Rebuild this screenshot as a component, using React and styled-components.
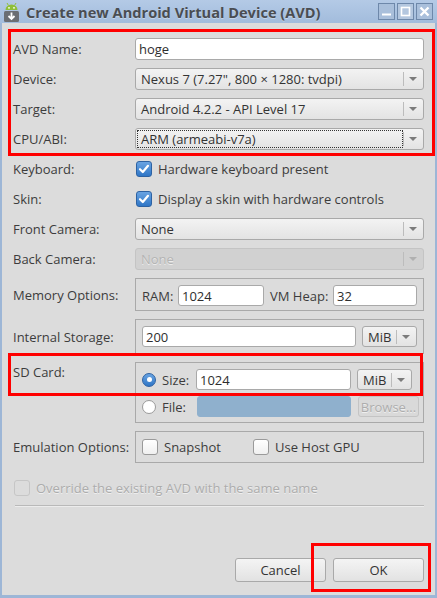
import React from 'react';
import styled, { createGlobalStyle, css } from 'styled-components';

const Global = createGlobalStyle`
  html, body {
    margin: 0;
    padding: 0;
    background: #dcdcdc;
  }
  body {
    font-family: "Open Sans", "DejaVu Sans", sans-serif;
    font-size: 13px;
    color: #3c3c3c;
  }
`;

const Window = styled.div`
  position: relative;
  width: 437px;
  height: 598px;
  box-sizing: border-box;
  border-left: 2px solid #9db6d6;
  border-right: 2px solid #9db6d6;
  border-bottom: 3px solid #9db6d6;
  display: flex;
  flex-direction: column;
  background: #dcdcdc;
`;

const TitleBar = styled.div`
  height: 23px;
  flex: none;
  display: flex;
  align-items: center;
  padding: 0 2px 0 3px;
  margin: 0 -2px;
  background: linear-gradient(#b4cae6, #a2bcdc);
`;

const Title = styled.div`
  flex: 1;
  margin-left: 6px;
  font-weight: 700;
  font-size: 14.6px;
  color: #4a4d52;
  text-shadow: 0 1px 0 rgba(255, 255, 255, 0.35);
  white-space: nowrap;
`;

const WinButtons = styled.div`
  display: flex;
  gap: 2px;
  margin-right: 2px;
`;

const WinButton = styled.div`
  width: 15px;
  height: 15px;
  border: 1px solid #6e88aa;
  background: ${p => (p.$dim ? '#b4c7df' : '#a9bfdb')};
  display: flex;
  align-items: center;
  justify-content: center;
`;

const Content = styled.div`
  flex: 1;
  min-height: 0;
  display: flex;
  flex-direction: column;
  padding: 15px 11px 13px 11px;
`;

const Form = styled.div`
  display: grid;
  grid-template-columns: 122px minmax(0, 1fr);
  row-gap: 8px;
`;

const Label = styled.div`
  display: flex;
  align-items: ${p => (p.$top ? 'flex-start' : 'center')};
  padding-top: ${p => (p.$top ? '1px' : '0')};
  min-height: 22px;
  white-space: nowrap;
`;

const Field = styled.div`
  box-sizing: border-box;
  height: 21px;
  width: ${p => p.$w || 'auto'};
  flex: ${p => (p.$w ? 'none' : '1')};
  min-width: 0;
  border: 1px solid #a9a9a9;
  border-radius: 3px;
  background: #fff;
  padding: 0 3px;
  display: flex;
  align-items: center;
  color: #2e2e2e;
  ${p =>
    p.$tall &&
    css`
      height: 22px;
    `}
  ${p =>
    p.$disabled &&
    css`
      background: #8fb0cd;
      border-color: #8fb0cd;
    `}
`;

const Combo = styled.div`
  box-sizing: border-box;
  height: ${p => (p.$short ? 21 : 22)}px;
  width: ${p => p.$w || 'auto'};
  flex: ${p => (p.$w ? 'none' : '1')};
  min-width: 0;
  border: 1px solid #a9a9a9;
  border-radius: 3px;
  background: linear-gradient(#f3f3f3, #e3e3e3);
  display: flex;
  align-items: center;
  padding: 1px;
  color: #333;
  ${p =>
    p.$disabled &&
    css`
      background: #d1d1d1;
      border-color: #c4c4c4;
      color: #b4b4b4;
      text-shadow: 0 1px 0 #ececec;
    `}
`;

const ComboText = styled.div`
  flex: 1;
  min-width: 0;
  height: 100%;
  box-sizing: border-box;
  display: flex;
  align-items: center;
  padding-left: 3px;
  white-space: nowrap;
  overflow: hidden;
  border: 1px dotted ${p => (p.$focused ? '#333' : 'transparent')};
`;

const ComboArrow = styled.div`
  width: 18px;
  height: 14px;
  flex: none;
  border-left: 1px solid #bcbcbc;
  display: flex;
  align-items: center;
  justify-content: center;
  &::after {
    content: '';
    border-left: 4px solid transparent;
    border-right: 4px solid transparent;
    border-top: 4px solid ${p => (p.$disabled ? '#b0b0b0' : '#7b7b7b')};
  }
`;

const CheckRow = styled.div`
  display: flex;
  align-items: center;
  gap: 6px;
  min-height: 22px;
  padding-left: ${p => p.$indent || 0}px;
  color: ${p => (p.$disabled ? '#acacac' : 'inherit')};
  text-shadow: ${p => (p.$disabled ? '0 1px 0 #efefef' : 'none')};
  white-space: nowrap;
`;

const Box = styled.div`
  box-sizing: border-box;
  width: 16px;
  height: 16px;
  flex: none;
  border-radius: 3px;
  display: flex;
  align-items: center;
  justify-content: center;
  border: 1px solid #9a9a9a;
  background: linear-gradient(#ffffff, #f0f0f0);
  ${p =>
    p.$checked &&
    css`
      border-color: #2d62a3;
      background: linear-gradient(#6aa4e2, #2f76c6);
    `}
  ${p =>
    p.$disabled &&
    css`
      border-color: #c6c6c6;
      background: #dcdcdc;
    `}
`;

const Radio = styled.div`
  box-sizing: border-box;
  width: 14px;
  height: 14px;
  flex: none;
  border-radius: 50%;
  border: 1px solid ${p => (p.$checked ? '#2d62a3' : '#9a9a9a')};
  background: ${p => (p.$checked ? 'linear-gradient(#6aa4e2, #2f76c6)' : '#fff')};
  display: flex;
  align-items: center;
  justify-content: center;
  &::after {
    content: '';
    display: ${p => (p.$checked ? 'block' : 'none')};
    width: 5px;
    height: 5px;
    border-radius: 50%;
    background: #fff;
  }
`;

const Group = styled.div`
  box-sizing: border-box;
  border: 1px solid #a9a9a9;
  padding: ${p => p.$pad || '6px 6px 4px'};
  display: flex;
  flex-direction: column;
  gap: 6px;
`;

const GroupRow = styled.div`
  display: flex;
  align-items: center;
  gap: ${p => p.$gap ?? 6}px;
`;

const Caption = styled.span`
  flex: none;
  white-space: nowrap;
  width: ${p => (p.$w ? p.$w + 'px' : 'auto')};
`;

const Button = styled.div`
  box-sizing: border-box;
  width: ${p => p.$w || 91}px;
  height: 24px;
  flex: none;
  border: 1px solid #a9a9a9;
  border-radius: 3px;
  background: linear-gradient(#f4f4f4, #e2e2e2);
  display: flex;
  align-items: center;
  justify-content: center;
  color: #333;
  ${p =>
    p.$disabled &&
    css`
      height: 21px;
      margin-left: 1px;
      background: #d9d9d9;
      border-color: #c4c4c4;
      color: #adadad;
      text-shadow: 0 1px 0 #efefef;
    `}
`;

const Override = styled(CheckRow)`
  margin-top: 14px;
`;

const Separator = styled.div`
  margin-top: 6px;
  margin-left: 2px;
  height: 1px;
  background: #b9b9b9;
  border-bottom: 1px solid #ececec;
`;

const Spacer = styled.div`
  flex: 1;
`;

const Footer = styled.div`
  display: flex;
  justify-content: flex-end;
  gap: 7px;
`;

const Mark = styled.div`
  position: absolute;
  box-sizing: border-box;
  border: 3px solid #ff0000;
  left: ${p => p.$x}px;
  top: ${p => p.$y}px;
  width: ${p => p.$w}px;
  height: ${p => p.$h}px;
  pointer-events: none;
`;

const Check = () => (
  <svg width="12" height="12" viewBox="0 0 12 12">
    <path d="M2 6.2 L4.8 9 L10 2.8" fill="none" stroke="#fff" strokeWidth="2.2" strokeLinecap="round" strokeLinejoin="round" />
  </svg>
);

const AppIcon = () => (
  <svg width="17" height="20" viewBox="0 0 17 20">
    <line x1="4" y1="1" x2="5.5" y2="3.5" stroke="#8fbf3a" strokeWidth="1" />
    <line x1="13" y1="1" x2="11.5" y2="3.5" stroke="#8fbf3a" strokeWidth="1" />
    <path d="M2.5 8 A6 5.5 0 0 1 14.5 8 Z" fill="#8fbf3a" />
    <circle cx="6" cy="5.8" r="0.9" fill="#fff" />
    <circle cx="11" cy="5.8" r="0.9" fill="#fff" />
    <rect x="1" y="9" width="15" height="11" rx="1.5" fill="#6b6e73" />
    <path d="M8.5 10.5 V16.5 M5.5 14 L8.5 17 L11.5 14" fill="none" stroke="#fff" strokeWidth="1.8" />
  </svg>
);

const MinGlyph = () => (
  <svg width="11" height="11" viewBox="0 0 11 11">
    <rect x="1" y="7.5" width="9" height="2" fill="#fff" />
  </svg>
);

const MaxGlyph = () => (
  <svg width="11" height="11" viewBox="0 0 11 11">
    <rect x="1.5" y="1.5" width="8" height="8" fill="none" stroke="#fff" strokeWidth="1.6" />
  </svg>
);

const CloseGlyph = () => (
  <svg width="11" height="11" viewBox="0 0 11 11">
    <path d="M1.5 1.5 L9.5 9.5 M9.5 1.5 L1.5 9.5" stroke="#fff" strokeWidth="2.4" />
  </svg>
);

const Select = ({ value, w, disabled, focused, short }) => (
  <Combo $w={w} $disabled={disabled} $short={short}>
    <ComboText $focused={focused}>{value}</ComboText>
    <ComboArrow $disabled={disabled} />
  </Combo>
);

export default function App() {
  return (
    <Window>
      <Global />
      <TitleBar>
        <AppIcon />
        <Title>Create new Android Virtual Device (AVD)</Title>
        <WinButtons>
          <WinButton><MinGlyph /></WinButton>
          <WinButton $dim><MaxGlyph /></WinButton>
          <WinButton><CloseGlyph /></WinButton>
        </WinButtons>
      </TitleBar>

      <Content>
        <Form>
          <Label>AVD Name:</Label>
          <Field $tall>hoge</Field>

          <Label>Device:</Label>
          <Select value={'Nexus 7 (7.27", 800 × 1280: tvdpi)'} />

          <Label>Target:</Label>
          <Select value="Android 4.2.2 - API Level 17" />

          <Label>CPU/ABI:</Label>
          <Select value="ARM (armeabi-v7a)" focused />

          <Label>Keyboard:</Label>
          <CheckRow $indent={1}>
            <Box $checked><Check /></Box>
            Hardware keyboard present
          </CheckRow>

          <Label>Skin:</Label>
          <CheckRow $indent={1}>
            <Box $checked><Check /></Box>
            Display a skin with hardware controls
          </CheckRow>

          <Label>Front Camera:</Label>
          <Select value="None" />

          <Label>Back Camera:</Label>
          <Select value="None" disabled />

          <Label>Memory Options:</Label>
          <Group>
            <GroupRow>
              <Caption $w={30}>RAM:</Caption>
              <Field $w="86px">1024</Field>
              <Caption $w={57}>VM Heap:</Caption>
              <Field>32</Field>
            </GroupRow>
          </Group>

          <Label>Internal Storage:</Label>
          <Group $pad="6px 6px 6px">
            <GroupRow>
              <Field>200</Field>
              <Select value="MiB" w="55px" short />
            </GroupRow>
          </Group>

          <Label $top>SD Card:</Label>
          <Group $pad="6px 12px 5px 6px">
            <GroupRow>
              <Radio $checked />
              <Caption $w={28}>Size:</Caption>
              <Field $w="155px">1024</Field>
              <Select value="MiB" w="55px" short />
            </GroupRow>
            <GroupRow>
              <Radio />
              <Caption $w={29}>File:</Caption>
              <Field $w="154px" $disabled />
              <Button $w={61} $disabled>Browse...</Button>
            </GroupRow>
          </Group>

          <Label>Emulation Options:</Label>
          <Group $pad="4px 6px 4px">
            <GroupRow $gap={0}>
              <CheckRow>
                <Box />
                <Caption $w={89}>Snapshot</Caption>
              </CheckRow>
              <CheckRow>
                <Box />
                Use Host GPU
              </CheckRow>
            </GroupRow>
          </Group>
        </Form>

        <Override $disabled $indent={1}>
          <Box $disabled />
          Override the existing AVD with the same name
        </Override>

        <Separator />
        <Spacer />

        <Footer>
          <Button>Cancel</Button>
          <Button>OK</Button>
        </Footer>
      </Content>

      <Mark $x={6} $y={29} $w={427} $h={127} />
      <Mark $x={6} $y={353} $w={415} $h={43} />
      <Mark $x={309} $y={543} $w={120} $h={49} />
    </Window>
  );
}
